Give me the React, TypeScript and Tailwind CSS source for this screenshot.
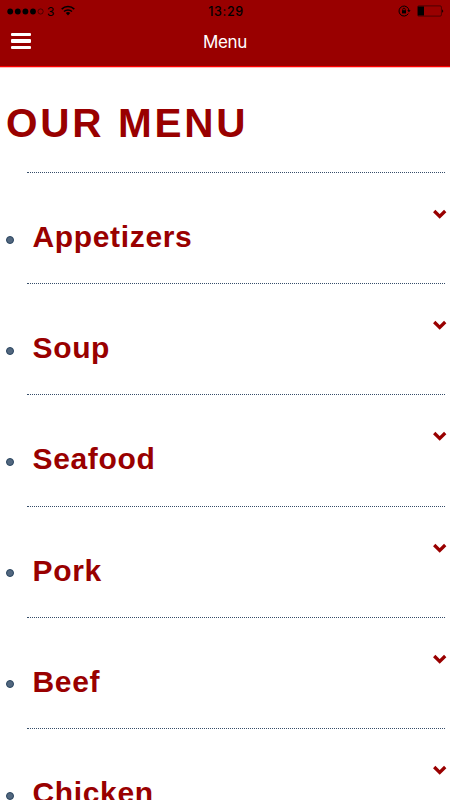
import React from 'react'

const categories = ['Appetizers', 'Soup', 'Seafood', 'Pork', 'Beef', 'Chicken']

function StatusBar() {
  return (
    <div className="flex h-[23px] items-center justify-between pl-[7px] pr-[6px] text-black">
      <div className="flex w-[100px] items-center">
        <svg width="38" height="8" viewBox="0 0 38 8">
          <circle cx="3.2" cy="3.5" r="2.9" />
          <circle cx="10.8" cy="3.5" r="2.9" />
          <circle cx="18.4" cy="3.5" r="2.9" />
          <circle cx="26" cy="3.5" r="2.9" />
          <circle cx="33.6" cy="3.5" r="2.6" fill="none" stroke="currentColor" strokeWidth="0.5" />
        </svg>
        <span className="ml-[2px] w-[8px] text-[13px] leading-[23px]">3</span>
        <svg className="ml-[6px] mt-[-2px]" width="14" height="11" viewBox="0 0 14 11" fill="none" stroke="currentColor" strokeWidth="1.5">
          <path d="M0.7 4.1a9 9 0 0 1 12.6 0" />
          <path d="M3 6.5a5.8 5.8 0 0 1 8 0" />
          <path d="M4.8 8.1a3.2 3.2 0 0 1 4.4 0L7 10.4z" fill="currentColor" stroke="none" />
        </svg>
      </div>
      <span className="pl-px font-['Inter',sans-serif] text-[12.5px] font-medium leading-[23px] tracking-[0.6px]">13:29</span>
      <div className="flex w-[100px] items-center justify-end gap-[6px]">
        {/* Rotation lock */}
        <svg className="mt-[-2px]" width="13" height="12" viewBox="0 0 13 12" fill="none" stroke="currentColor">
          <path d="M10.3 8.6A5 5 0 1 1 11 6" strokeWidth="1" />
          <path d="M9.2 5.2h3.4L11 7.3z" fill="currentColor" stroke="none" />
          <rect x="4" y="5.2" width="4" height="3.2" fill="currentColor" stroke="none" />
          <path d="M4.7 5.5V4.5a1.3 1.3 0 0 1 2.6 0v1" strokeWidth="0.8" />
        </svg>
        <svg className="mt-[-1px]" width="27" height="12" viewBox="0 0 27 12">
          <rect x="0.6" y="0.9" width="23.8" height="10.2" rx="1.2" fill="none" stroke="currentColor" strokeWidth="0.5" />
          <rect x="1" y="1.5" width="6" height="9" />
          <path d="M25.2 4.2a2.4 2.4 0 0 1 0 3.6z" />
        </svg>
      </div>
    </div>
  )
}

export default function App() {
  return (
    <div className="h-[800px] overflow-hidden bg-white font-['Liberation_Sans',Arial,sans-serif]">
      <header className="h-[67px] border-b border-[#ff0000] bg-[#990000] shadow-[0_1px_0_#ffb8b8]">
        <StatusBar />
        <div className="grid h-[37px] grid-cols-[60px_1fr_60px] items-center">
          <button aria-label="Open navigation" className="ml-[11px] mt-[-1px] flex w-5 flex-col gap-[3px]">
            <span className="h-[3.5px] rounded-[1px] bg-white" />
            <span className="h-[3.5px] rounded-[1px] bg-white" />
            <span className="h-[3.5px] rounded-[1px] bg-white" />
          </button>
          <span className="pt-[2px] text-center font-['Inter',sans-serif] text-[17px] tracking-[-0.4px] text-white">Menu</span>
        </div>
      </header>

      <main className="pl-[6px] pr-[5px] text-[#990000]">
        <h1 className="mt-[32px] h-[73px] whitespace-nowrap text-[40.5px] font-bold leading-[48px] tracking-[2.7px]">OUR MENU</h1>

        <ul>
          {categories.map((name) => (
            <li key={name} className="flex h-[111.2px]">
              <span className="mt-[63.6px] size-[8px] shrink-0 rounded-full border border-[#29445f] bg-[#52677f]" />
              <div className="ml-[13px] flex flex-1 justify-between border-t border-dotted border-[#364d69]">
                <h2 className="ml-[5.5px] mt-[46px] text-[30px] font-bold leading-[36px] tracking-[0.65px]">{name}</h2>
                <svg className="mr-[-2px] mt-[35px]" width="14" height="12" viewBox="0 0 14 12" fill="none" stroke="currentColor" strokeWidth="3.3">
                  <path d="M1.2 3L6.7 8.4L12.2 3" />
                </svg>
              </div>
            </li>
          ))}
        </ul>
      </main>
    </div>
  )
}
